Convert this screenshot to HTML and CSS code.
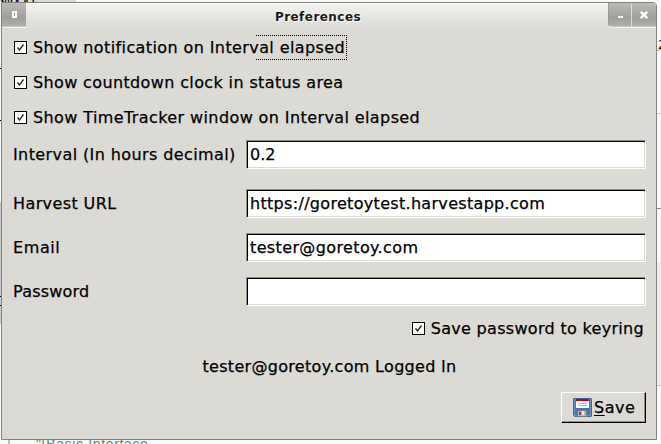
FILE: index.html
```html
<!DOCTYPE html>
<html lang="en">
<head>
<meta charset="utf-8">
<title>Preferences</title>
<link rel="stylesheet" href="styles.css">
</head>
<body>
<div class="backdrop">
  <div class="top-strip">W/.l.t.. |..T.l..</div>
  <i class="bg upper"></i><i class="bg middle"></i><i class="bg lower"></i>
  <i class="tick t1"></i><i class="tick t2"></i><i class="tick t3"></i><i class="tick t4"></i>
  <i class="guide"></i><i class="mark"></i>
  <span class="number">2</span>
  <span class="caption">"[Basic Interface</span>
</div>
<main class="window">
  <header class="titlebar">
    <span class="wbtn menu"><svg width="5" height="7"><path fill="#fff" d="M0 0h5v7H0z"/><path fill="#999" d="M2 2h1v3H2z"/></svg></span>
    <h1>Preferences</h1>
    <span class="wbtn min"><svg width="5" height="2"><path fill="#fff" d="M0 0h5v2H0z"/></svg></span>
    <span class="wbtn close"><svg width="8" height="8"><path stroke="#fff" stroke-width="2.4" d="M.8.8l6.4 6.4M7.2.8L.8 7.2"/></svg></span>
  </header>
  <form class="content">
    <div class="check"><span class="box"><svg width="11" height="11"><path d="M2.500 5.500l2 2.500L8.500 2.500"/></svg></span><span class="text">Show notification on Interval elapsed</span><i class="focus"></i></div>
    <div class="check"><span class="box"><svg width="11" height="11"><path d="M2.500 5.500l2 2.500L8.500 2.500"/></svg></span><span class="text countdown">Show countdown clock in status area</span></div>
    <div class="check"><span class="box"><svg width="11" height="11"><path d="M2.500 5.500l2 2.500L8.500 2.500"/></svg></span><span class="text">Show TimeTracker window on Interval elapsed</span></div>
    <div class="row first"><span class="label">Interval (In hours decimal)</span><div class="field"><span class="interval">0.2</span></div></div>
    <div class="row"><span class="label">Harvest URL</span><div class="field"><span class="value">https://goretoytest.harvestapp.com</span></div></div>
    <div class="row"><span class="label email">Email</span><div class="field"><span class="value mail">tester@goretoy.com</span></div></div>
    <div class="row"><span class="label password">Password</span><div class="field"></div></div>
    <div class="check keyring"><span class="box"><svg width="11" height="11"><path d="M2.500 5.500l2 2.500L8.500 2.500"/></svg></span><span class="value">Save password to keyring</span></div>
    <div class="status"><span class="value">tester@goretoy.com Logged In</span></div>
    <div class="save">
      <svg width="19" height="19" viewBox="0 0 19 19"><path fill="#3465a4" d="M1 0h17l1 1v17l-1 1H2l-2-2V1z"/><path fill="#6595cf" d="M1 1h17v17H2l-1-1z"/><path fill="#4475b2" d="M2 2h15v15H2z"/><path fill="#fff" d="M3 1h13v9H3z"/><path fill="#c00" d="M3 1h13v2H3z"/><path stroke="#bbb" d="M5 5.5h9M5 7.5h9"/><path fill="#b6b8b4" stroke="#777b75" d="M4.500 12.500h9v6h-9z"/><path fill="#555" d="M6 14h2v3H6z"/><path fill="#eee" d="M9 13h2v4H9z"/></svg>
      <span><u>S</u>ave</span>
    </div>
  </form>
</main>
</body>
</html>
```
FILE: styles.css
```css
* { box-sizing: border-box; }
body { margin: 0; width: 661px; height: 444px; overflow: hidden; position: relative; background: #fafafa; color: #000; font: 16px/20px "DejaVu Sans", sans-serif; }
svg { display: block; }
.backdrop i, .backdrop span, .top-strip { position: absolute; }
.top-strip { left: 0; top: 0; width: 76px; height: 2px; overflow: hidden; background: #dcdad5; font-size: 14px; line-height: 2px; }
.bg { right: 0; width: 4px; }
.upper { top: 113px; height: 96px; border-top: 1px solid #ccc; border-bottom: 1px solid #888; }
.middle { top: 262px; height: 124px; background: #ededed; border-bottom: 1px solid #ccc; }
.lower { left: 0; width: 1px; top: 202px; height: 122px; background: #ccc; }
.tick { left: 0; width: 1px; height: 1px; background: #000; }
.t1 { top: 68px; } .t2 { top: 120px; } .t3 { top: 296px; } .t4 { top: 305px; }
.guide { left: 8px; top: 440px; width: 2px; height: 4px; background: #a9c9ba; }
.mark { left: 657px; top: 49px; width: 4px; height: 2px; background: #d8cfba; }
.number { left: 658px; top: 35px; font-size: 12px; }
.caption { left: 36px; top: 436px; font: 14px/17px "Liberation Sans", sans-serif; color: #61877b; white-space: pre; letter-spacing: .65px; }
.window { position: absolute; left: 1px; top: 2px; width: 656px; height: 438px; border: 1px solid #82827e; border-radius: 0 4px 0 0; background: #dcdad5; overflow: hidden; }
.titlebar { height: 25px; display: flex; align-items: flex-start; background: linear-gradient(#f2f2f0, #dcdad5); border-top: 1px solid #fff; }
.titlebar h1 { flex: 1; margin: 4px 0 0 2px; font-size: 12px; line-height: 18px; letter-spacing: .45px; text-align: center; color: #1a1a1a; text-shadow: 1px 1px #fff; }
.wbtn { width: 24px; height: 24px; margin-top: -1px; display: flex; align-items: center; justify-content: center; background: linear-gradient(#bcbbb7, #a09f9b 65%, #b0afab); border-bottom: 1px solid #c8c7c3; box-shadow: 0 1px #f5f5f3; }
.min { border-left: 1px solid #989894; border-right: 1px solid #ddd; border-radius: 0 0 0 4px; }
.min svg { margin-top: 5px; }
.content { margin: 0; padding: 9px 10px 0 11px; -webkit-text-stroke: .25px #000; }
.check { height: 21px; margin-bottom: 14px; padding-left: 1px; display: flex; align-items: center; position: relative; white-space: nowrap; }
.box { width: 13px; height: 13px; margin-right: 6px; border: 1px solid #000; background: #fff; }
.box path { fill: none; stroke: #222; stroke-width: 1.3; }
.text { letter-spacing: .4px; }
.countdown { letter-spacing: .37px; }
.value { letter-spacing: .31px; }
.mail { letter-spacing: .37px; }
.check > .text, .check > .value { line-height: 21px; }
.focus { position: absolute; left: 243px; top: -2px; width: 91px; height: 25px; border: 1px dotted #000; border-left: 0; }
.row { height: 29px; margin-bottom: 15px; display: flex; align-items: center; white-space: nowrap; }
.row.first { margin: -2px 0 20px; }
.label { width: 233px; letter-spacing: .4px; }
.label.email { letter-spacing: .6px; }
.label.password { letter-spacing: .2px; }
.field { width: 400px; height: 29px; padding: 4px 3px 2px; background: #fff; border: 1px solid; border-color: #8f8d83 #fff #fff #8f8d83; box-shadow: inset 1px 1px #000, inset -1px -1px #dcdad5; }
.keyring { justify-content: flex-end; margin: -3px 2px 18px 0; }
.status { height: 20px; text-align: center; }
.save { width: 85px; height: 31px; margin: 15px 0 0 auto; padding: 0 0 0 11px; display: flex; align-items: center; gap: 2px; border: 1px solid; border-color: #fff #000 #000 #fff; box-shadow: inset -1px -1px #968e80; letter-spacing: .5px; }
.save u { text-underline-offset: 2px; text-decoration-thickness: 1px; }
```
